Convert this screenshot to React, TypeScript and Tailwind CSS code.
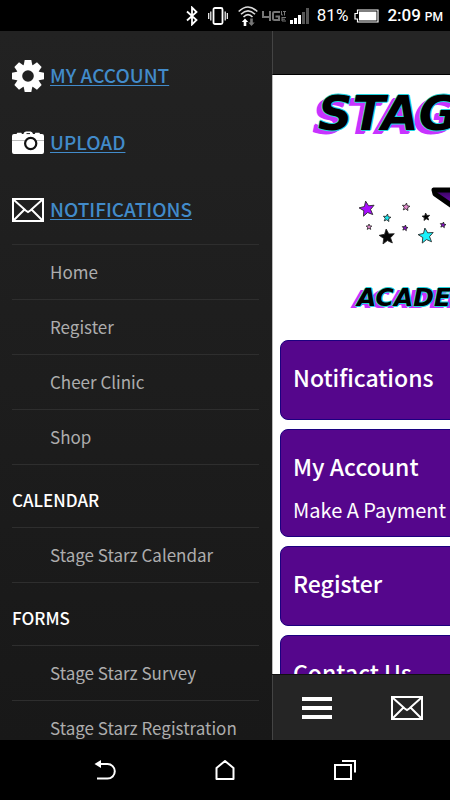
import type { ReactNode } from "react";

const accountLinks = [
  { label: "MY ACCOUNT", icon: <GearIcon /> },
  { label: "UPLOAD", icon: <CameraIcon /> },
  { label: "NOTIFICATIONS", icon: <MailIcon /> },
];

const sections = [
  { title: "", items: ["Home", "Register", "Cheer Clinic", "Shop"] },
  { title: "CALENDAR", items: ["Stage Starz Calendar"] },
  { title: "FORMS", items: ["Stage Starz Survey", "Stage Starz Registration"] },
];

const cards = [
  { title: "Notifications" },
  { title: "My Account", text: "Make A Payment /" },
  { title: "Register" },
  { title: "Contact Us" },
];

const stars = [
  { x: 94, y: 27, r: 8, fill: "#a80cff", turn: -10 },
  { x: 114, y: 36, r: 4, fill: "#19e6ee", turn: 8 },
  { x: 133, y: 25, r: 4, fill: "#e58bd0", turn: 8 },
  { x: 96, y: 45, r: 3, fill: "#e58bd0", turn: 0 },
  { x: 132, y: 46, r: 3, fill: "#8a12c9", turn: 10 },
  { x: 153, y: 35, r: 4, fill: "#000000", turn: -6 },
  { x: 170, y: 43, r: 3, fill: "#8a12c9", turn: 10 },
  { x: 114, y: 55, r: 8, fill: "#050505", turn: -6 },
  { x: 153, y: 54, r: 8, fill: "#19f2fb", turn: -8 },
];

function starPoints(r: number) {
  return Array.from({ length: 10 }, (_, i) => {
    const d = i % 2 ? r * 0.45 : r;
    const a = (Math.PI / 5) * i - Math.PI / 2;
    return `${(d * Math.cos(a)).toFixed(2)},${(d * Math.sin(a)).toFixed(2)}`;
  }).join(" ");
}

function GearIcon() {
  return (
    <svg width="32" height="32" viewBox="0 0 32 32" aria-hidden="true">
      <g fill="#fff">
        {[0, 45, 90, 135].map((a) => (
          <path key={a} d="M12.700 0h6.600l1 5v22l-1 5h-6.600l-1-5V5z" transform={`rotate(${a} 16 16)`} />
        ))}
        <circle cx="16" cy="16" r="11.500" />
      </g>
      <circle cx="16" cy="16" r="5.800" fill="#212121" />
    </svg>
  );
}

function CameraIcon() {
  return (
    <svg width="32" height="24" viewBox="0 0 32 24" aria-hidden="true">
      <path
        d="M2 3h2.500l.8-1.200h4L10 3h1.300l1-1.800L14 .5h4.500l1.600.7 1 1.800h1.600l.7-1.200h4L28 3h2a2 2 0 0 1 2 2v16a2 2 0 0 1-2 2H2a2 2 0 0 1-2-2V5a2 2 0 0 1 2-2z"
        fill="#fff"
      />
      <path d="M14.500 2.600h3.500" stroke="#222" />
      <path d="M0 9.500h32" stroke="#bbb" />
      <circle cx="18.700" cy="12.500" r="5.600" fill="#fff" stroke="#111" strokeWidth="2.200" />
    </svg>
  );
}

function MailIcon() {
  return (
    <svg width="32" height="24" viewBox="0 0 32 24" fill="none" stroke="#fff" strokeWidth="2" aria-hidden="true">
      <rect x="1" y="1" width="30" height="22" />
      <path d="M2 2l11.700 10.500 2.300 1.500 2.300-1.500L30 2M2 22l10.500-10.500M30 22L19.500 11.500" />
    </svg>
  );
}

function StatusBar() {
  return (
    <header className="flex h-[31px] shrink-0 items-center justify-end bg-black pr-[7px] pt-px font-[Roboto,sans-serif] text-[17px] text-white">
      <svg width="12" height="20" viewBox="0 0 12 20" fill="none" stroke="#fff" strokeWidth="1.800" aria-label="Bluetooth">
        <path d="M1 5.500l9.500 8.500L6 18.500v-17L10.500 6 1 14.500" />
      </svg>
      <svg className="ml-2.5" width="20" height="18" viewBox="0 0 20 18" fill="none" stroke="#fff" aria-label="Vibrate">
        <path d="M.7 6v6M2.800 4.500v9M19.300 6v6M17.200 4.500v9" strokeWidth="1.200" />
        <rect x="5.500" y="1" width="9" height="16" rx="1.500" strokeWidth="1.800" />
      </svg>
      <svg className="ml-2.5" width="20" height="20" viewBox="0 0 20 20" fill="none" aria-label="Wi-Fi">
        <path d="M.7 5.500Q10-3.500 19.300 5.500M3 8.300Q10 1.500 17 8.300M5.500 11Q10 6.300 14.500 11" stroke="#ddd" strokeWidth="1.600" />
        <path d="M7 12.500l3.200 3.500H8.300v4H5.700v-4H3.800z" fill="#fff" />
        <path d="M13.500 20l-3.200-3.500h1.900v-4h2.600v4h1.900z" fill="#777" />
      </svg>
      <span className="ml-1 flex text-[#777]">
        <svg width="25" height="11" viewBox="0 0 25 11" fill="none" stroke="currentColor" strokeWidth="2" aria-label="4G LTE">
          <path d="M1 0v6h8M8 0v10M18 1h-5.500a1.500 1.500 0 0 0-1.500 1.500v5A1.500 1.500 0 0 0 12.500 9H17V5.500h-3.500" />
          <path d="M19.500 0v4H21M21 .5h3M22.500 0v4.500M20 6v4M20 6.500h4M20 8.200h3M20 10h4" strokeWidth="1" />
        </svg>
      </span>
      <svg className="ml-[3px]" width="20" height="16" viewBox="0 0 20 16" aria-label="Signal">
        <path d="M0 12h3v4H0zM4 10h3v6H4zM8 7h3v9H8z" fill="#fff" />
        <path d="M12 4h3v12h-3zM16 0h3v16h-3z" fill="#555" />
      </svg>
      <span className="ml-[7px]">81%</span>
      <svg className="ml-1.5" width="25" height="14" viewBox="0 0 25 14" aria-label="Battery">
        <path d="M3.500 1h20.500v12H3.500v-3H1V4.500h2.500z" fill="none" stroke="#fff" strokeWidth="1.200" />
        <path d="M5 2.500H22.500v9H5z" fill="#fff" />
      </svg>
      <span className="ml-2 flex items-baseline gap-1 font-medium">
        2:09 <span className="text-[12px]">PM</span>
      </span>
    </header>
  );
}

function Drawer() {
  return (
    <nav className="w-[272px] shrink-0 overflow-hidden bg-linear-to-b from-[#222] to-[#181818] pl-3 pr-[13px] pt-[11px]">
      <div className="pb-px">
        {accountLinks.map(({ label, icon }) => (
          <a key={label} href="#" className="flex h-[67px] items-center gap-1.5 text-[19px] font-medium text-[#428bca]">
            {icon}
            <span className="underline decoration-1 underline-offset-2">{label}</span>
          </a>
        ))}
      </div>
      {sections.map(({ title, items }) => (
        <section key={title}>
          {title && <h2 className="flex h-[62px] items-center pt-2 text-[17px] font-medium text-white">{title}</h2>}
          <ul>
            {items.map((item) => (
              <li key={item} className="border-t border-[#2e2e2e]">
                <a href="#" className="flex h-[54px] items-center pl-[38px] text-[17px] whitespace-nowrap text-[#adadad]">
                  {item}
                </a>
              </li>
            ))}
          </ul>
          <div className="border-t border-[#2e2e2e]" />
        </section>
      ))}
    </nav>
  );
}

function Logo() {
  const lettering = "font-['DejaVu_Sans',sans-serif] font-bold italic whitespace-nowrap text-black";
  return (
    <div className="flex flex-col pb-[26px] pt-2">
      <h1
        className={`${lettering} pl-[45px] text-[48px] leading-[60px] [text-shadow:-1px_0_#22d3dd,1px_0_#22d3dd,0_-1px_#22d3dd,0_1px_#22d3dd,-6px_4px_#c733ff,-5px_3px_#c733ff]`}
      >
        STAGE STARZ
      </h1>
      <svg className="mt-8 w-full overflow-visible" height="107" aria-hidden="true">
        <defs>
          <linearGradient id="starFill" x1="0" y1="0" x2="0" y2="1">
            <stop offset="0.350" stopColor="#2e0350" />
            <stop offset="0.450" stopColor="#5c0a96" />
          </linearGradient>
        </defs>
        {stars.map(({ x, y, r, fill, turn }) => (
          <polygon
            key={`${x}-${y}`}
            points={starPoints(r)}
            transform={`translate(${x} ${y + 7}) rotate(${turn})`}
            fill={fill}
            stroke="#222"
            strokeWidth="0.800"
          />
        ))}
        <path
          d="M161 15h50l14-42 14 42h50l1 4-41 27 14 42-38-26-38 26 14-42-39-27z"
          fill="url(#starFill)"
          stroke="#000"
          strokeWidth="5"
          strokeLinejoin="round"
        />
      </svg>
      <p
        className={`${lettering} pl-[84px] text-[25px] leading-[32px] [text-shadow:-1px_0_#22d3dd,1px_0_#22d3dd,0_-1px_#22d3dd,0_1px_#22d3dd,-5px_2px_#c733ff,-4px_2px_#c733ff]`}
      >
        ACADEMY
      </p>
    </div>
  );
}

function BarButton({ label, children }: { label: string; children: ReactNode }) {
  return (
    <button type="button" aria-label={label} className="flex w-1/5 items-center justify-center">
      {children}
    </button>
  );
}

function Page() {
  return (
    <div className="flex w-screen shrink-0 flex-col bg-white">
      <div className="h-11 shrink-0 border-b border-l border-b-black border-l-[#444] bg-[#252525]" />
      <main className="min-h-0 flex-1 overflow-hidden border-l border-[#bbb]">
        <Logo />
        <div className="flex flex-col gap-[9px] px-[7px]">
          {cards.map(({ title, text }) => (
            <a key={title} href="#" className="flex min-h-20 flex-col rounded-lg border border-[#1c0080] bg-[#55068c] px-3 pb-2.5 pt-5 text-white">
              <span className="text-[23px] leading-8 font-medium">{title}</span>
              {text && <span className="pt-3 text-[20px] leading-8">{text}</span>}
            </a>
          ))}
        </div>
      </main>
      <div className="flex h-[66px] shrink-0 border-t border-[#111] bg-[#252525] shadow-[inset_1px_0_#444]">
        <BarButton label="Menu">
          <svg width="30" height="22" viewBox="0 0 30 22" aria-hidden="true">
            <path d="M0 0h30v4H0zM0 9h30v4H0zM0 18h30v4H0z" fill="#fff" />
          </svg>
        </BarButton>
        <BarButton label="Messages">
          <MailIcon />
        </BarButton>
      </div>
    </div>
  );
}

function SystemNav() {
  return (
    <footer className="flex h-[60px] shrink-0 items-center bg-black px-[10%]">
      <button type="button" aria-label="Back" className="flex flex-1 justify-center">
        <svg width="22" height="20" viewBox="0 0 22 20" fill="none" stroke="#fff" strokeWidth="2" aria-hidden="true">
          <path d="M5 4h8.500a7.300 7.300 0 0 1 0 14.600H3" />
          <path d="M.5 4L7 0v8z" fill="#fff" stroke="none" />
        </svg>
      </button>
      <button type="button" aria-label="Home" className="flex flex-1 justify-center">
        <svg width="20" height="20" viewBox="0 0 20 20" fill="none" stroke="#fff" strokeWidth="2" strokeLinejoin="round" aria-hidden="true">
          <path d="M1.500 8L10 1l8.500 7v11h-17z" />
        </svg>
      </button>
      <button type="button" aria-label="Recent apps" className="flex flex-1 justify-center">
        <svg width="22" height="20" viewBox="0 0 22 20" fill="none" stroke="#fff" strokeWidth="2" aria-hidden="true">
          <path d="M1 5h16v14H1zM8 1h13v11.500" />
        </svg>
      </button>
    </footer>
  );
}

export default function App() {
  return (
    <div className="flex h-screen flex-col overflow-hidden bg-black font-['Noto_Sans_CJK_SC',sans-serif]">
      <StatusBar />
      <div className="flex min-h-0 flex-1 overflow-hidden">
        <Drawer />
        <Page />
      </div>
      <SystemNav />
    </div>
  );
}
